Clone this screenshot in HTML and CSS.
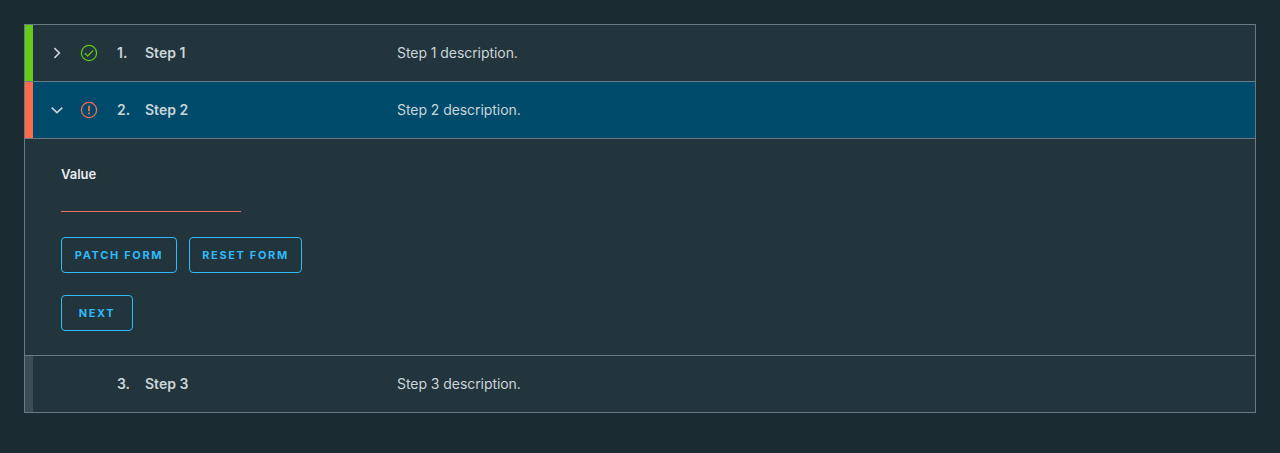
FILE: index.html
```html
<!DOCTYPE html>
<html lang="en">
<head>
<meta charset="utf-8">
<title>Stepper</title>
<link rel="stylesheet" href="styles.css">
</head>
<body>
<form class="stepper">
  <div class="step complete">
    <span class="status"></span>
    <svg class="icon caret" viewBox="0 0 16 16"><path d="M5.4 3.2 10.4 8l-5 4.8"/></svg>
    <svg class="icon state" viewBox="0 0 18 18"><circle cx="9" cy="9" r="7.6"/><path d="m4.8 9.1 2.9 2.9 5.6-5.6"/></svg>
    <span class="number">1.</span>
    <span class="title">Step 1</span>
    <span class="description">Step 1 description.</span>
  </div>
  <div class="step error">
    <span class="status"></span>
    <svg class="icon caret" viewBox="0 0 16 16"><path d="M2.7 5.6 8 10.6l5.3-5"/></svg>
    <svg class="icon state" viewBox="0 0 18 18"><circle cx="9" cy="9" r="7.6"/><path class="mark" d="M9 4.8v5.4M9 11.6v1.7"/></svg>
    <span class="number">2.</span>
    <span class="title">Step 2</span>
    <span class="description">Step 2 description.</span>
  </div>
  <div class="content">
    <label class="label" for="value">Value</label>
    <input class="input" id="value" type="text">
    <div class="actions">
      <button class="button patch" type="button">PATCH FORM</button>
      <button class="button reset" type="button">RESET FORM</button>
    </div>
    <button class="button next" type="button">NEXT</button>
  </div>
  <div class="step inactive">
    <span class="status"></span>
    <span class="icon caret"></span>
    <span class="icon state"></span>
    <span class="number">3.</span>
    <span class="title">Step 3</span>
    <span class="description">Step 3 description.</span>
  </div>
</form>
</body>
</html>
```
FILE: styles.css
```css
* { box-sizing: border-box; }
body {
  margin: 0;
  padding: 24px;
  background: #1b2b32;
  font-family: Metropolis, Inter, sans-serif;
  color: #cbd4d8;
}
.stepper {
  border: 1px solid #6a7a81;
  background: #22343c;
}
.step {
  display: flex;
  align-items: center;
  height: 57px;
  border-bottom: 1px solid #6a7a81;
  font-size: 14px;
  line-height: 24px;
}
.step:last-child { height: 56px; border-bottom: 0; }
.status {
  width: 8px;
  align-self: stretch;
  margin-right: 16px;
  background: #3b4c54;
}
.complete .status { background: #66cb18; }
.error .status { background: #ff6a4d; }
.error { background: #004b6b; }
.icon {
  fill: none;
  stroke: currentColor;
  flex: none;
}
.caret {
  width: 16px;
  height: 16px;
  stroke-width: 1.6;
  margin-right: 15px;
}
.state {
  width: 18px;
  height: 18px;
  stroke-width: 1.25;
  margin-right: 19px;
}
.complete .state { color: #62cb15; }
.error .state { color: #ff6a4d; }
.mark { stroke-width: 1.8; }
.number { width: 28px; font-weight: 600; }
.title { width: 252px; font-weight: 600; }
.description { letter-spacing: -0.06px; }
.content {
  height: 217px;
  padding: 23px 36px 24px;
  border-bottom: 1px solid #6a7a81;
}
.label {
  display: block;
  font-size: 13px;
  line-height: 24px;
  font-weight: 600;
  color: #e8ecee;
}
.input {
  display: block;
  width: 180px;
  height: 24px;
  margin: 2px 0 25px;
  padding: 0 6px;
  border: 0;
  border-bottom: 1px solid #e8705c;
  background: none;
  color: inherit;
}
.actions { display: flex; gap: 12px; margin-bottom: 22px; }
.button {
  display: block;
  height: 36px;
  padding: 0;
  border: 1px solid #2fbafa;
  border-radius: 4px;
  background: none;
  color: #2fbafa;
  font: 700 11px/34px Metropolis, Inter, sans-serif;
  letter-spacing: 1.65px;
}
.patch { width: 116px; }
.reset { width: 113px; }
.next { width: 72px; }
```
